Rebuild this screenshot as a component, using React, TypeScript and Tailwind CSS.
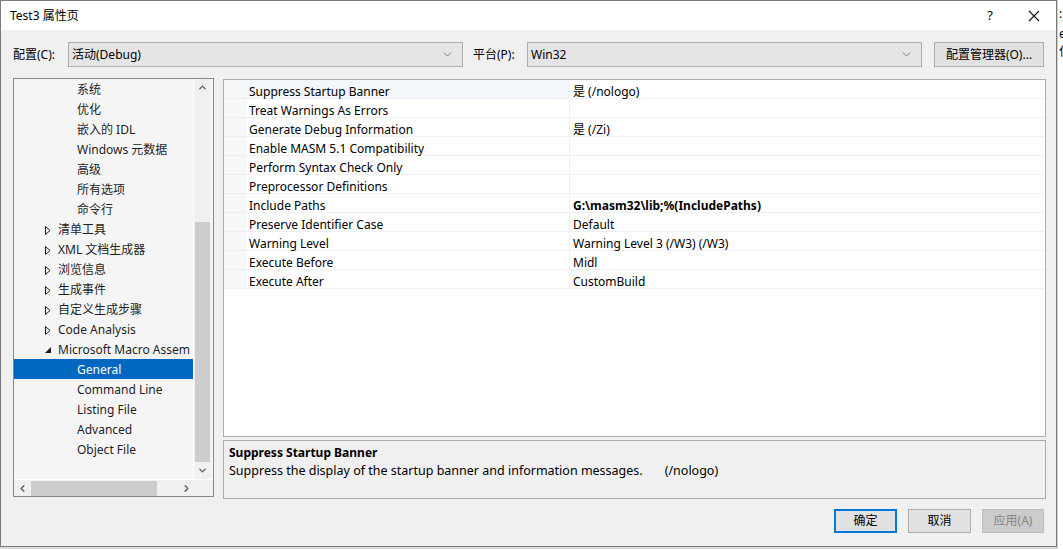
import { ChevronDown, ChevronUp, ChevronLeft, ChevronRight } from "lucide-react";

const treeItems = [
  { label: "系统", level: 2 },
  { label: "优化", level: 2 },
  { label: "嵌入的 IDL", level: 2 },
  { label: "Windows 元数据", level: 2 },
  { label: "高级", level: 2 },
  { label: "所有选项", level: 2 },
  { label: "命令行", level: 2 },
  { label: "清单工具", level: 1 },
  { label: "XML 文档生成器", level: 1 },
  { label: "浏览信息", level: 1 },
  { label: "生成事件", level: 1 },
  { label: "自定义生成步骤", level: 1 },
  { label: "Code Analysis", level: 1 },
  { label: "Microsoft Macro Assem", level: 1, open: true },
  { label: "General", level: 2, selected: true },
  { label: "Command Line", level: 2 },
  { label: "Listing File", level: 2 },
  { label: "Advanced", level: 2 },
  { label: "Object File", level: 2 },
];

const props = [
  { name: "Suppress Startup Banner", value: "是 (/nologo)" },
  { name: "Treat Warnings As Errors", value: "" },
  { name: "Generate Debug Information", value: "是 (/Zi)" },
  { name: "Enable MASM 5.1 Compatibility", value: "" },
  { name: "Perform Syntax Check Only", value: "" },
  { name: "Preprocessor Definitions", value: "" },
  { name: "Include Paths", value: "G:\\masm32\\lib;%(IncludePaths)", bold: true },
  { name: "Preserve Identifier Case", value: "Default" },
  { name: "Warning Level", value: "Warning Level 3 (/W3) (/W3)" },
  { name: "Execute Before", value: "Midl" },
  { name: "Execute After", value: "CustomBuild" },
];

const Closed = () => (
  <svg width="6" height="9" viewBox="0 0 6 9" className="shrink-0">
    <path d="M0.5 0.5 L5 4.5 L0.5 8.5 Z" fill="none" stroke="#1e1e1e" strokeWidth="1" />
  </svg>
);

const Opened = () => (
  <svg width="6" height="6" viewBox="0 0 6 6" className="shrink-0">
    <path d="M6 0 L6 6 L0 6 Z" fill="#1e1e1e" />
  </svg>
);

const Select = ({ text, width }: { text: string; width: string }) => (
  <div className={`${width} h-[25px] bg-[#e5e5e5] border border-[#adadad] flex items-center pl-[3px] pr-[8px]`}>
    <span className="flex-1">{text}</span>
    <ChevronDown size={13} strokeWidth={1.3} className="text-[#555]" />
  </div>
);

const App = () => {
  return (
    <div className="w-[1063px] h-[549px] flex bg-[#d9d9d9] overflow-hidden text-[12px] text-black font-[family-name:'Noto_Sans','Noto_Sans_CJK_SC',sans-serif]">
      <div className="w-[1057px] h-[547px] shrink-0 flex flex-col border border-[#7a7a7a] bg-[#f0f0f0]">
        {/* title bar */}
        <div className="h-[29px] bg-white flex items-center pl-[9px] shrink-0">
          <span className="flex-1">Test3 属性页</span>
          <span className="w-[14px] text-[13px] mr-[31px] text-center">?</span>
          <svg width="12" height="12" viewBox="0 0 12 12" className="mr-[16px]">
            <path d="M1 1 L11 11 M11 1 L1 11" stroke="#111" strokeWidth="1.1" />
          </svg>
        </div>

        {/* config row */}
        <div className="flex items-center mt-[12px] pl-[12px] h-[25px]">
          <span className="w-[55px]">配置(C):</span>
          <Select text="活动(Debug)" width="w-[395px]" />
          <span className="ml-[10px] w-[54px]">平台(P):</span>
          <Select text="Win32" width="w-[395px]" />
          <button className="ml-[12px] w-[110px] h-[25px] bg-[#e1e1e1] border border-[#adadad]">配置管理器(O)...</button>
        </div>

        {/* main */}
        <div className="flex mt-[11px] pl-[12px]">
          {/* tree */}
          <div className="w-[201px] h-[419px] border border-[#828790] bg-[#f5f5f5] flex flex-col">
            <div className="flex h-[400px]">
              <div className="w-[180px] overflow-hidden border-r border-white text-[#1e1e1e]">
                {treeItems.map((it) => (
                  <div
                    key={it.label}
                    className={`h-[20px] pt-[2px] flex items-center whitespace-nowrap ${
                      it.selected ? "bg-[#0067c0] text-white" : ""
                    } ${it.level === 2 ? "pl-[63px]" : "pl-[31px]"}`}
                  >
                    {it.level === 1 && (
                      <span className="w-[13px] shrink-0 flex items-center">{it.open ? <Opened /> : <Closed />}</span>
                    )}
                    <span className="shrink-0">{it.label}</span>
                  </div>
                ))}
              </div>
              <div className="w-[17px] flex flex-col items-center bg-[#f0f0f0]">
                <div className="h-[17px] flex items-center justify-center">
                  <ChevronUp size={11} strokeWidth={3} className="text-[#606060]" />
                </div>
                <div className="flex-1 w-full flex flex-col">
                  <div className="h-[126px]" />
                  <div className="h-[240px] mx-px bg-[#cdcdcd]" />
                </div>
                <div className="h-[17px] flex items-center justify-center">
                  <ChevronDown size={11} strokeWidth={3} className="text-[#606060]" />
                </div>
              </div>
            </div>
            <div className="flex h-[17px] border-t border-white">
              <div className="w-[181px] flex items-center bg-[#f0f0f0]">
                <div className="w-[17px] flex justify-center">
                  <ChevronLeft size={11} strokeWidth={3} className="text-[#606060]" />
                </div>
                <div className="w-[126px] h-[15px] bg-[#cdcdcd]" />
                <div className="flex-1" />
                <div className="w-[17px] flex justify-center">
                  <ChevronRight size={11} strokeWidth={3} className="text-[#606060]" />
                </div>
              </div>
              <div className="flex-1 bg-[#f0f0f0]" />
            </div>
          </div>

          {/* right column */}
          <div className="ml-[9px] w-[823px] flex flex-col">
            <div className="h-[358px] mt-[1px] border border-[#adadad] bg-white">
              {props.map((p, i) => (
                <div key={p.name} className="flex h-[19px] border-b border-[#eef0f3]">
                  <div className="w-[23px] bg-[#f7f8fa]" />
                  <div
                    className={`w-[322px] pl-[2px] pt-[6px] flex items-center whitespace-nowrap ${
                      i === 0 ? "bg-[#f3f6fa]" : ""
                    }`}
                  >
                    {p.name}
                  </div>
                  <div
                    className={`flex-1 pl-[3px] pt-[6px] flex items-center border-l border-[#eef0f3] whitespace-nowrap ${
                      p.bold ? "font-bold" : ""
                    }`}
                  >
                    {p.value}
                  </div>
                </div>
              ))}
            </div>
            <div className="mt-[3px] h-[59px] border border-[#adadad] bg-[#f0f0f0] pl-[5px] pt-[3px]">
              <div className="font-bold leading-[18px]">Suppress Startup Banner</div>
              <div className="leading-[18px] text-[12.5px]">
                Suppress the display of the startup banner and information messages.
                <span className="ml-[22px]">(/nologo)</span>
              </div>
            </div>
          </div>
        </div>

        {/* buttons */}
        <div className="flex justify-end mt-[10px] pr-[12px] gap-[11px]">
          <button className="w-[63px] h-[24px] bg-[#e1e1e1] border-2 border-[#0078d7]">确定</button>
          <button className="w-[63px] h-[24px] bg-[#e1e1e1] border border-[#adadad]">取消</button>
          <button className="w-[62px] h-[24px] bg-[#cccccc] border border-[#bfbfbf] text-[#838383]">应用(A)</button>
        </div>
      </div>

      {/* window behind */}
      <div className="flex-1 bg-white text-[12px] overflow-hidden whitespace-nowrap border-l border-[#cfcfcf] pl-[1px]">
        <div className="mt-[5px] h-[16px]">:</div>
        <div className="mt-[4px] h-[18px]">e</div>
        <div className="h-[18px]">仁</div>
      </div>
    </div>
  );
};

export default App;
